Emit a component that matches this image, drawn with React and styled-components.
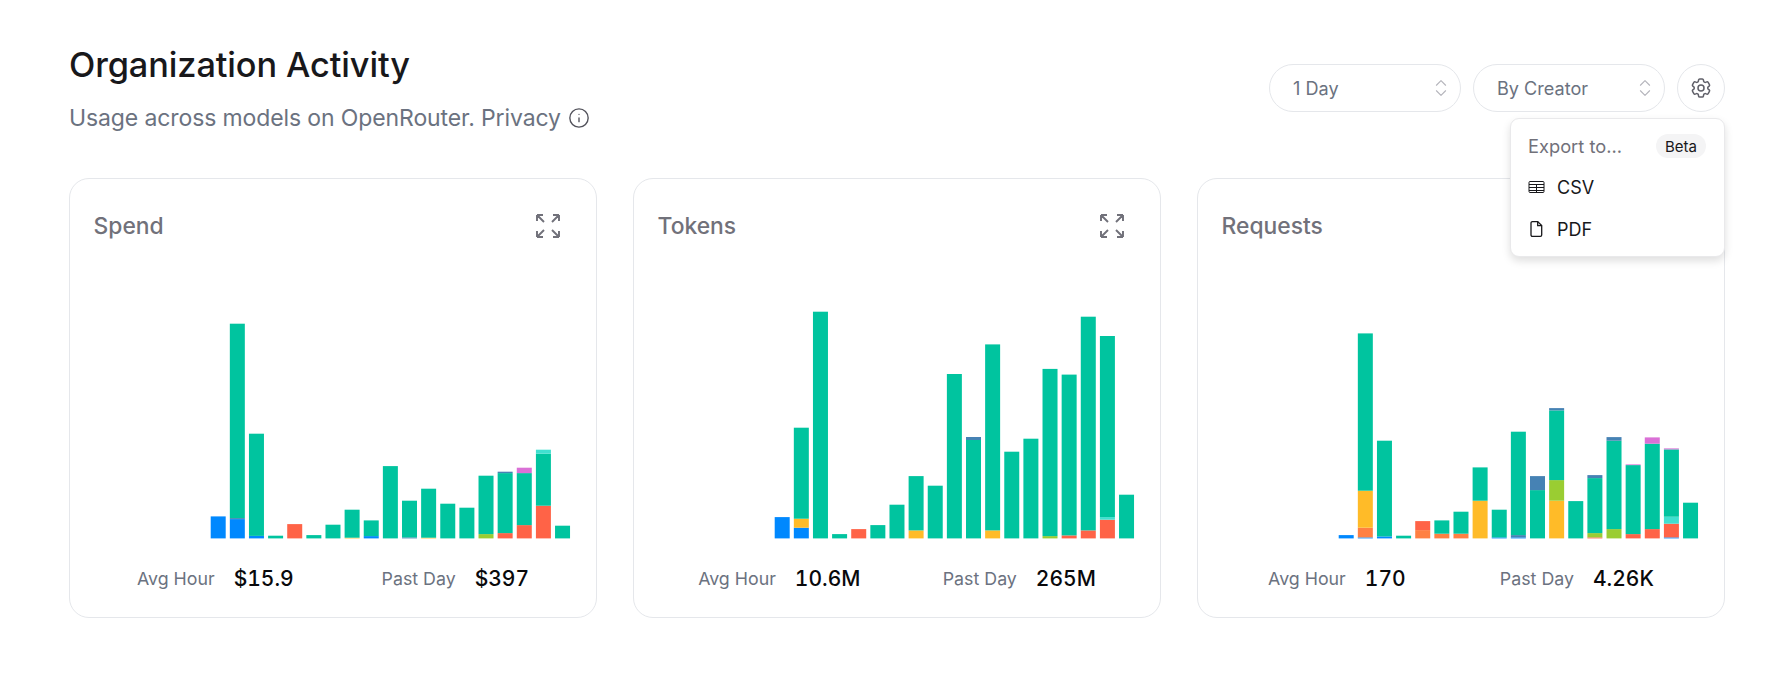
import { ChevronsUpDown, Info } from "lucide-react";
import styled, { createGlobalStyle } from "styled-components";

const GlobalStyle = createGlobalStyle`
    body {
        margin: 0;
        background: #fff;
        font-family: Inter, "Noto Sans", sans-serif;
        color: #18181b;
    }
`;

const Page = styled.div`
    width: 1656px;
    padding: 45px 0 0 69px;
`;

const Top = styled.header`
    display: flex;
    justify-content: space-between;
    align-items: flex-start;
`;

const Title = styled.h1`
    margin: 0;
    font-size: 34.3px;
    line-height: 40px;
    font-weight: 500;
    letter-spacing: -0.1px;
    color: #18181b;
`;

const Subtitle = styled.p`
    display: flex;
    align-items: center;
    gap: 7px;
    margin: 19px 0 0;
    font-size: 23px;
    line-height: 28px;
    letter-spacing: -0.115px;
    color: #6b7280;
`;

const Controls = styled.div`
    position: relative;
    display: flex;
    gap: 12px;
    margin-top: 19px;
`;

const Select = styled.button`
    display: flex;
    align-items: center;
    justify-content: space-between;
    box-sizing: border-box;
    width: 192px;
    height: 48px;
    padding: 0 8px 0 23px;
    border: 1px solid #e5e7eb;
    border-radius: 24px;
    background: #fff;
    font: 400 18.1px Inter, sans-serif;
    color: #6b7280;
    svg {
        color: #b4b4bb;
    }
`;

const GearButton = styled.button`
    display: flex;
    align-items: center;
    justify-content: center;
    box-sizing: border-box;
    width: 48px;
    height: 48px;
    padding: 0;
    border: 1px solid #e5e7eb;
    border-radius: 50%;
    background: #fff;
    color: #5f5f68;
`;

const Menu = styled.div`
    position: absolute;
    z-index: 2;
    top: 54px;
    right: 0;
    box-sizing: border-box;
    width: 215px;
    height: 139px;
    padding: 15px 18px 0 17px;
    border: 1px solid #e9e9eb;
    border-radius: 9px;
    background: #fff;
    box-shadow: 0 4px 8px rgba(0, 0, 0, 0.13);
`;

const MenuHead = styled.div`
    display: flex;
    align-items: center;
    justify-content: space-between;
    height: 24px;
    font-size: 18.3px;
    color: #71717a;
`;

const Badge = styled.span`
    display: flex;
    align-items: center;
    height: 24px;
    padding: 0 9px;
    border-radius: 12px;
    background: #f4f4f5;
    font-size: 15px;
    color: #18181b;
`;

const MenuItem = styled.div`
    display: flex;
    align-items: center;
    height: 42px;
    font-size: 18px;
    color: #18181b;
    svg {
        flex: none;
        margin-right: 12px;
    }
`;

const MenuItems = styled.div`
    margin-top: 8px;
`;

const Cards = styled.section`
    display: grid;
    grid-template-columns: repeat(3, 528px);
    gap: 36px;
    margin-top: 46px;
`;

const Card = styled.article`
    box-sizing: border-box;
    height: 440px;
    padding: 31px 23px 0;
    border: 1px solid #e5e7eb;
    border-radius: 20px;
    background: #fff;
`;

const CardHead = styled.div`
    display: flex;
    align-items: center;
    justify-content: space-between;
    height: 32px;
`;

const CardTitle = styled.h2`
    margin: 0 0 0 0.5px;
    font-size: 22.85px;
    line-height: 32px;
    font-weight: 500;
    color: #71717a;
`;

const Expand = styled.button`
    display: flex;
    padding: 0;
    margin-right: 9px;
    border: 0;
    background: none;
    color: #71717a;
`;

const ChartSvg = styled.svg`
    display: block;
    width: 480px;
    height: 300px;
    margin-top: -2px;
`;

const Stats = styled.div`
    display: flex;
    justify-content: space-around;
    margin-top: 24px;
`;

const Stat = styled.div`
    display: flex;
    align-items: center;
    gap: 19px;
    height: 28px;
`;

const StatLabel = styled.span`
    font-size: 17.8px;
    color: #6b7280;
`;

const StatValue = styled.span`
    font-size: 21px;
    font-weight: 500;
    font-variant-numeric: tabular-nums;
    color: #09090b;
`;

const COLORS = {
    g: "#00c49f",
    b: "#0088fe",
    r: "#ff6347",
    a: "#ffbb28",
    o: "#ff8042",
    l: "#9acd32",
    s: "#4682b4",
    p: "#da70d6",
    t: "#40e0d0",
};

//Each bar is a list of [colour, top of the segment above the baseline].
const SPEND = [
    [["b", 22]],
    [["b", 19.3], ["s", 20.3], ["g", 214.7]],
    [["b", 2.5], ["g", 104.7]],
    [["g", 2.7]],
    [["r", 14.3]],
    [["g", 3.3]],
    [["g", 13.7]],
    [["a", 0.7], ["g", 28.7]],
    [["b", 2.3], ["g", 18]],
    [["g", 72.3]],
    [["s", 1], ["g", 37.7]],
    [["a", 0.7], ["g", 49.7]],
    [["g", 34.7]],
    [["g", 30.7]],
    [["l", 4.3], ["g", 62.7]],
    [["r", 5.3], ["g", 65.3], ["s", 66.7]],
    [["r", 13.3], ["g", 65.3], ["p", 70.7]],
    [["r", 32.7], ["g", 84.7], ["t", 88.7]],
    [["g", 12.7]],
];

const TOKENS = [
    [["b", 21.3]],
    [["b", 10.7], ["a", 19.7], ["g", 110.7]],
    [["g", 226.7]],
    [["g", 4.3]],
    [["r", 9.3]],
    [["g", 13.3]],
    [["g", 33.7]],
    [["a", 8], ["g", 62.3]],
    [["g", 52.7]],
    [["g", 164.4]],
    [["g", 98.4], ["s", 101.4]],
    [["a", 8], ["g", 194]],
    [["g", 86.7]],
    [["g", 99.7]],
    [["l", 2.3], ["g", 169.5]],
    [["r", 3], ["g", 163.8]],
    [["r", 8], ["g", 221.7]],
    [["r", 18.7], ["t", 21.3], ["g", 202.4]],
    [["g", 43.7]],
];

const REQUESTS = [
    [["b", 3.3]],
    [["b", 1], ["o", 10.7], ["a", 47.7], ["g", 205]],
    [["b", 2], ["g", 97.7]],
    [["g", 2.7]],
    [["o", 8.3], ["r", 17.3]],
    [["o", 4.7], ["g", 18]],
    [["o", 4.7], ["g", 26.7]],
    [["a", 37.7], ["g", 71]],
    [["b", 1], ["g", 28.7]],
    [["b", 1], ["s", 3.3], ["g", 106.7]],
    [["g", 48.3], ["s", 62.3]],
    [["a", 37.7], ["l", 58.3], ["g", 128], ["s", 130.3]],
    [["g", 37.3]],
    [["r", 1], ["l", 5.3], ["g", 60.3], ["s", 63.3]],
    [["l", 9.3], ["g", 97.7], ["s", 101.3]],
    [["r", 4.3], ["g", 73.3], ["p", 74]],
    [["r", 9.3], ["g", 94.7], ["p", 101]],
    [["b", 1], ["r", 14.7], ["t", 21.7], ["g", 89], ["p", 90]],
    [["g", 35.7]],
];

const BAR_START = 117.7;
const BAR_PITCH = 19.13;
const BAR_WIDTH = 15;
const BASELINE = 298.4;

const Chart = ({ bars }) => (
    <ChartSvg viewBox="0 0 480 300" aria-hidden="true">
        {bars.map((segments, i) =>
            segments.map(([color, top], j) => {
                const bottom = j === 0 ? 0 : segments[j - 1][1];
                return (
                    <rect
                        key={`${i}-${j}`}
                        x={BAR_START + i * BAR_PITCH}
                        y={BASELINE - top}
                        width={BAR_WIDTH}
                        height={top - bottom}
                        fill={COLORS[color]}
                    />
                );
            })
        )}
    </ChartSvg>
);

const ExpandIcon = () => (
    <svg width="32" height="32" viewBox="0 0 24 24" fill="none" stroke="currentColor" strokeWidth="1.45">
        <path d="M3.75 3.75v4.5m0-4.5h4.5m-4.5 0L9 9M3.75 20.25v-4.5m0 4.5h4.5m-4.5 0L9 15M20.25 3.75h-4.5m4.5 0v4.5m0-4.5L15 9m5.25 11.25h-4.5m4.5 0v-4.5m0 4.5L15 15" />
    </svg>
);

const GearIcon = () => (
    <svg width="24" height="24" viewBox="0 0 24 24" fill="none" stroke="currentColor" strokeWidth="1.5">
        <path d="M9.594 3.94c.09-.542.56-.94 1.11-.94h2.593c.55 0 1.02.398 1.11.94l.213 1.281c.063.374.313.686.645.87.074.04.147.083.22.127.325.196.72.257 1.075.124l1.217-.456a1.125 1.125 0 0 1 1.37.49l1.296 2.247a1.125 1.125 0 0 1-.26 1.431l-1.003.827c-.293.241-.438.613-.43.992a7.723 7.723 0 0 1 0 .255c-.008.378.137.75.43.991l1.004.827c.424.35.534.955.26 1.43l-1.298 2.247a1.125 1.125 0 0 1-1.369.491l-1.217-.456c-.355-.133-.75-.072-1.076.124a6.47 6.47 0 0 1-.22.128c-.331.183-.581.495-.644.869l-.213 1.281c-.09.543-.56.94-1.11.94h-2.594c-.55 0-1.019-.398-1.11-.94l-.213-1.281c-.062-.374-.312-.686-.644-.87a6.52 6.52 0 0 1-.22-.127c-.325-.196-.72-.257-1.076-.124l-1.217.456a1.125 1.125 0 0 1-1.369-.49l-1.297-2.247a1.125 1.125 0 0 1 .26-1.431l1.004-.827c.292-.24.437-.613.43-.991a6.932 6.932 0 0 1 0-.255c.007-.38-.138-.751-.43-.992l-1.004-.827a1.125 1.125 0 0 1-.26-1.43l1.297-2.247a1.125 1.125 0 0 1 1.37-.491l1.216.456c.356.133.751.072 1.076-.124.072-.044.146-.086.22-.128.332-.183.582-.495.644-.869l.214-1.28Z" />
        <path d="M15 12a3 3 0 1 1-6 0 3 3 0 0 1 6 0Z" />
    </svg>
);

const TableIcon = () => (
    <svg width="17" height="14" viewBox="0 0 17 14" fill="none" stroke="#18181b" strokeWidth="1">
        <rect x="1" y="1.5" width="15" height="11" rx="1" />
        <path d="M1 4.5h15M1 7.5h15M1 10.5h15M8.5 4.5v8" />
    </svg>
);

const FileIcon = () => (
    <svg width="17" height="18" viewBox="0 0 17 18" fill="none" stroke="#18181b" strokeWidth="1.3">
        <path d="M3 3a1.4 1.4 0 0 1 1.4-1.4h5.3l4 4v9.4a1.4 1.4 0 0 1-1.4 1.4H4.4A1.4 1.4 0 0 1 3 15V3Z" />
        <path d="M9.7 1.6v4h4" />
    </svg>
);

const CARDS = [
    { title: "Spend", bars: SPEND, hour: "$15.9", day: "$397" },
    { title: "Tokens", bars: TOKENS, hour: "10.6M", day: "265M" },
    { title: "Requests", bars: REQUESTS, hour: "170", day: "4.26K" },
];

const App = () => {
    return (
        <>
            <GlobalStyle />
            <Page>
                <Top>
                    <div>
                        <Title>Organization Activity</Title>
                        <Subtitle>
                            Usage across models on OpenRouter. Privacy
                            <Info size={22} strokeWidth={1.5} color="#52525b" />
                        </Subtitle>
                    </div>
                    <Controls>
                        <Select>
                            1 Day
                            <ChevronsUpDown size={22} strokeWidth={1.2} />
                        </Select>
                        <Select>
                            By Creator
                            <ChevronsUpDown size={22} strokeWidth={1.2} />
                        </Select>
                        <GearButton>
                            <GearIcon />
                        </GearButton>
                        <Menu>
                            <MenuHead>
                                Export to...
                                <Badge>Beta</Badge>
                            </MenuHead>
                            <MenuItems>
                                <MenuItem>
                                    <TableIcon />
                                    CSV
                                </MenuItem>
                                <MenuItem>
                                    <FileIcon />
                                    PDF
                                </MenuItem>
                            </MenuItems>
                        </Menu>
                    </Controls>
                </Top>
                <Cards>
                    {CARDS.map((card) => (
                        <Card key={card.title}>
                            <CardHead>
                                <CardTitle>{card.title}</CardTitle>
                                <Expand>
                                    <ExpandIcon />
                                </Expand>
                            </CardHead>
                            <Chart bars={card.bars} />
                            <Stats>
                                <Stat>
                                    <StatLabel>Avg Hour</StatLabel>
                                    <StatValue>{card.hour}</StatValue>
                                </Stat>
                                <Stat>
                                    <StatLabel>Past Day</StatLabel>
                                    <StatValue>{card.day}</StatValue>
                                </Stat>
                            </Stats>
                        </Card>
                    ))}
                </Cards>
            </Page>
        </>
    );
};

export default App;
